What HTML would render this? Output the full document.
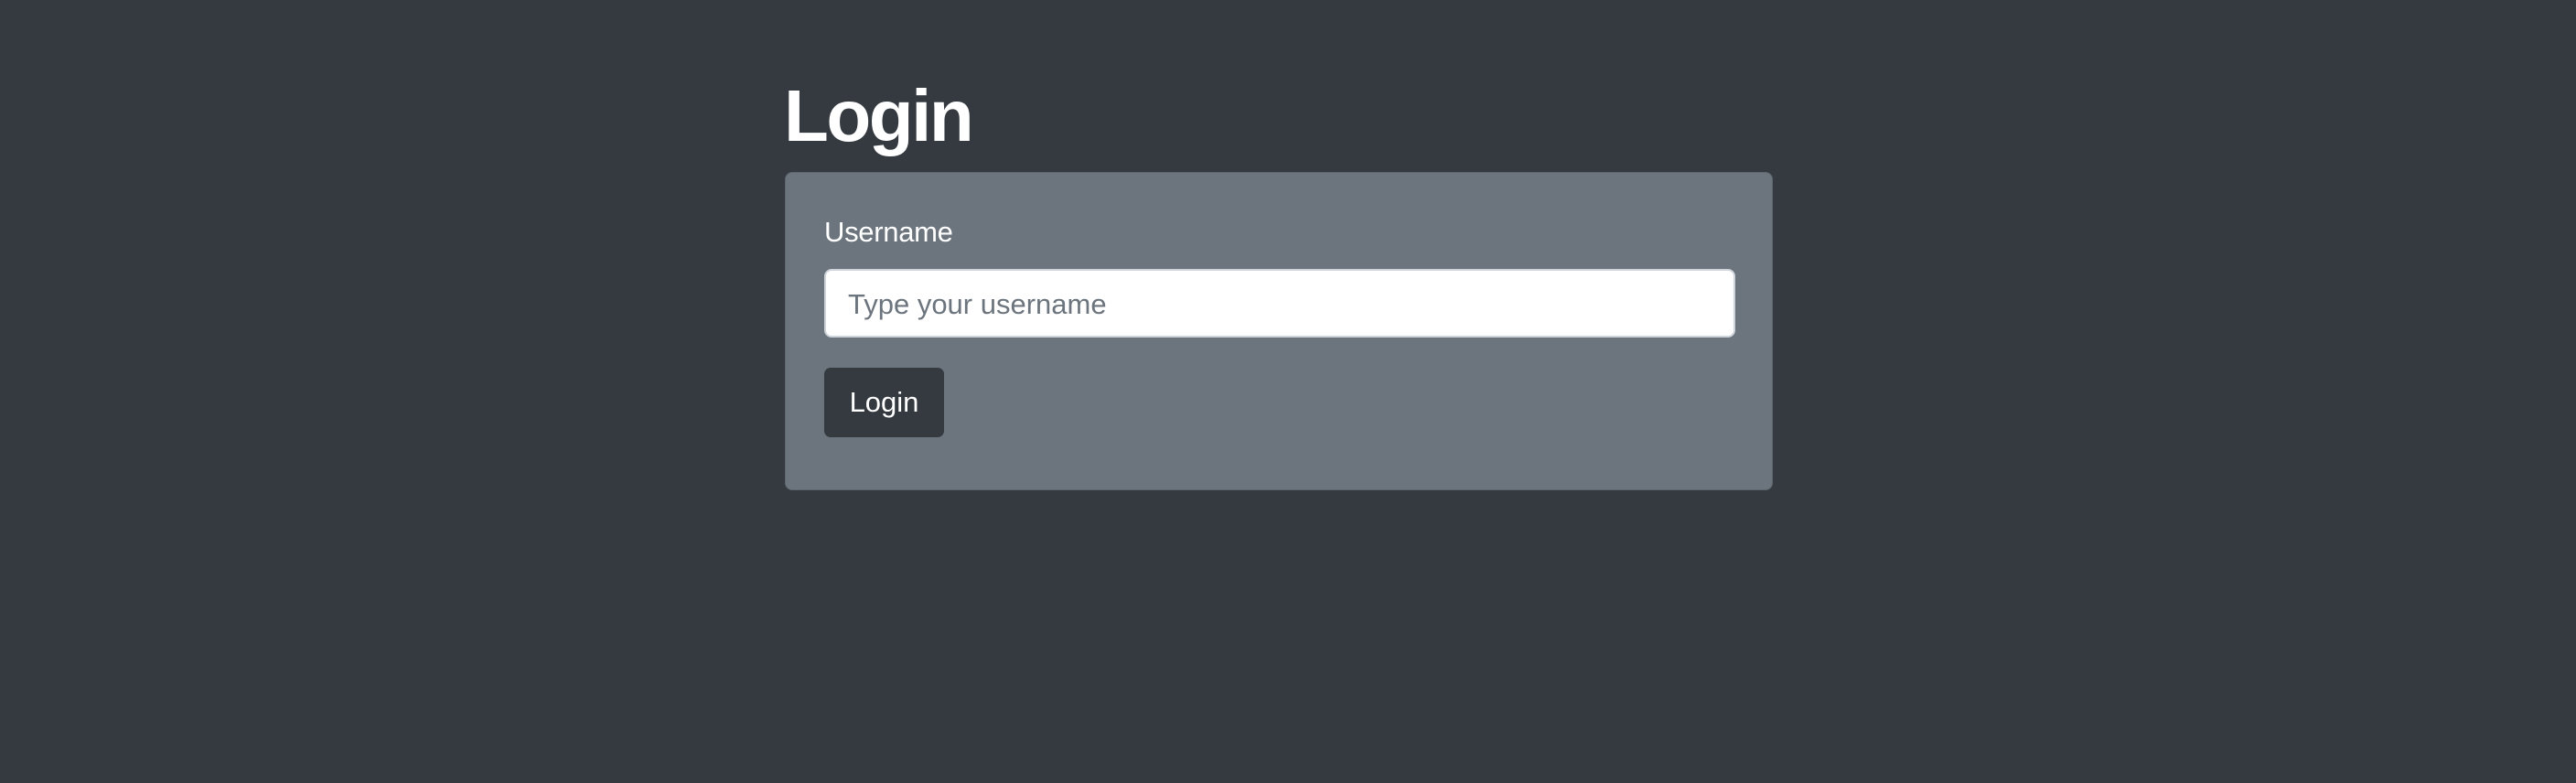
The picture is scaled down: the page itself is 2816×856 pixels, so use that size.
<!DOCTYPE html>
<html><head><meta charset="utf-8"><style>
html,body{margin:0;padding:0;width:2816px;height:856px;background:#343a40;overflow:hidden;font-family:"Liberation Sans",sans-serif}
h1{position:absolute;left:857px;top:72px;margin:0;font-size:80px;font-weight:bold;color:#fff;line-height:110px;letter-spacing:-2.5px}
.card{position:absolute;left:858px;top:188px;width:1080px;height:348px;background:#6c757d;border:1px solid #5f676e;border-radius:8px;box-sizing:border-box}
.lbl{position:absolute;left:42px;top:45px;font-size:31px;color:#fff;line-height:40px;letter-spacing:-0.3px}
.inp{position:absolute;left:42px;top:105px;width:996px;height:75px;background:#fff;border:2px solid #ced4da;border-radius:8px;box-sizing:border-box}
.inp span{position:absolute;left:24px;top:17px;font-size:31px;color:#6c757d;line-height:40px}
.btn{position:absolute;left:42px;top:213px;width:131px;height:76px;background:#343a40;border-radius:7px;color:#fff;font-size:31px;line-height:76px;text-align:center}
</style></head><body>
<h1>Login</h1>
<div class="card">
<div class="lbl">Username</div>
<div class="inp"><span>Type your username</span></div>
<div class="btn">Login</div>
</div>
</body></html>
